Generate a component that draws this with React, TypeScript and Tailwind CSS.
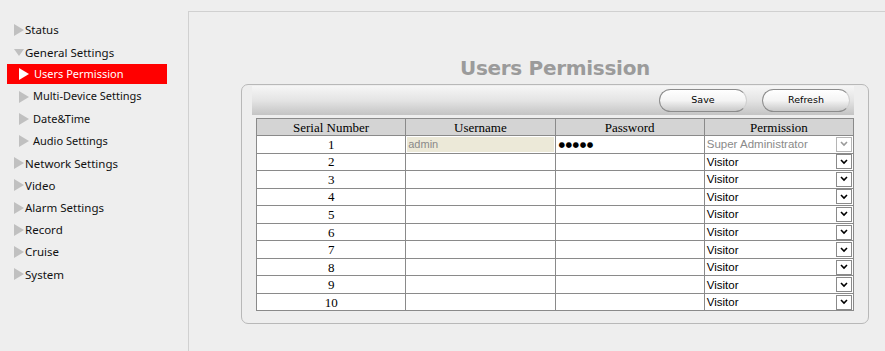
import React from 'react'

const MENU = [
  { label: 'Status', level: 0 },
  { label: 'General Settings', level: 0, open: true },
  { label: 'Users Permission', level: 1, active: true },
  { label: 'Multi-Device Settings', level: 1 },
  { label: 'Date&Time', level: 1 },
  { label: 'Audio Settings', level: 1 },
  { label: 'Network Settings', level: 0 },
  { label: 'Video', level: 0 },
  { label: 'Alarm Settings', level: 0 },
  { label: 'Record', level: 0 },
  { label: 'Cruise', level: 0 },
  { label: 'System', level: 0 },
]

const USERS = Array.from({ length: 10 }, (_, i) => ({
  id: i + 1,
  username: i === 0 ? 'admin' : '',
  password: i === 0 ? '●●●●●' : '',
  permission: i === 0 ? 'Super Administrator' : 'Visitor',
}))

function Triangle({ open, color }: { open?: boolean; color: string }) {
  return (
    <svg width="10" height="12" viewBox="0 0 10 12" className="shrink-0">
      {open ? (
        <polygon points="0,3 10,3 5,10" fill={color} />
      ) : (
        <polygon points="0,0 10,6 0,12" fill={color} />
      )}
    </svg>
  )
}

function Sidebar() {
  return (
    <div className="w-[188px] shrink-0 pt-[19px] font-['Noto_Sans',sans-serif]">
      {MENU.map(item => (
        <div key={item.label} className="h-[22.2px] flex items-center">
          {item.active ? (
            <div className="ml-[7px] w-[160px] h-[20px] bg-[#ff0000] flex items-center pl-[12px] gap-[5px] text-white text-[11px]">
              <Triangle color="#ffffff" />
              <span>{item.label}</span>
            </div>
          ) : item.level === 1 ? (
            <div className="pl-[19px] flex items-center gap-[4px] text-[11px] text-[#111]">
              <Triangle color="#c0c0c0" />
              <span>{item.label}</span>
            </div>
          ) : (
            <div className="pl-[14px] flex items-center gap-[1px] text-[11.5px] text-[#111]">
              <Triangle open={item.open} color="#c0c0c0" />
              <span>{item.label}</span>
            </div>
          )}
        </div>
      ))}
    </div>
  )
}

function Select({ value, disabled }: { value: string; disabled?: boolean }) {
  return (
    <div className="flex items-center h-[16px] pl-[2px] pr-[1px]">
      <span
        className={`flex-1 text-[11.5px] leading-[14px] font-['Liberation_Sans',Arial,sans-serif] ${disabled ? 'text-[#8a8a8a]' : 'text-black'}`}
      >
        {value}
      </span>
      <span
        className={`w-[16px] h-[15px] border flex items-center justify-center bg-white ${disabled ? 'border-[#b5b5b5]' : 'border-[#8a8a8a]'}`}
      >
        <svg width="8" height="6" viewBox="0 0 8 6">
          <polyline
            points="1,1 4,4 7,1"
            fill="none"
            stroke={disabled ? '#9a9a9a' : '#000'}
            strokeWidth="1.6"
          />
        </svg>
      </span>
    </div>
  )
}

function PillButton({ label }: { label: string }) {
  return (
    <button className="w-[88px] h-[23px] rounded-full border border-[#8c8c8c] border-r-[#d0d0d0] bg-gradient-to-b from-white via-[#f4f4f4] to-[#c9c9c9] text-[9.5px] text-black font-['DejaVu_Sans',sans-serif]">
      {label}
    </button>
  )
}

export default function App() {
  return (
    <div className="w-[885px] h-[351px] bg-[#eeeeee] flex overflow-hidden">
      <Sidebar />
      <div className="flex-1 mt-[11px] border-t border-l border-[#d0d0d0]">
        <h1 className="mt-[44px] ml-[52px] w-[628px] text-center text-[20px] leading-[24px] font-bold text-[#9b9b9b] font-['DejaVu_Sans',Verdana,sans-serif] tracking-[-0.3px]">
          Users Permission
        </h1>
        <div className="ml-[52px] mt-[4px] w-[628px] h-[240px] rounded-[7px] border border-[#b8b8b8] pl-[10px] pt-[1px]">
          <div className="w-[602px] h-[29px] bg-gradient-to-b from-[#f6f6f6] via-[#e4e4e4] to-[#c4c4c4] flex items-center justify-end gap-[15px] pr-[4px]">
            <PillButton label="Save" />
            <PillButton label="Refresh" />
          </div>
          <table className="ml-[4px] mt-[3px] w-[598px] border-collapse table-fixed font-['Liberation_Serif',serif] text-[13px]">
            <thead>
              <tr className="bg-[#d4d4d4]">
                {['Serial Number', 'Username', 'Password', 'Permission'].map(h => (
                  <th key={h} className="border border-[#8a8a8a] font-normal p-0 h-[17px] leading-[15px]">
                    {h}
                  </th>
                ))}
              </tr>
            </thead>
            <tbody className="bg-white">
              {USERS.map(u => (
                <tr key={u.id}>
                  <td className="border border-[#8a8a8a] text-center p-0 h-[17.55px] leading-[15px]">{u.id}</td>
                  <td className="border border-[#8a8a8a] p-0">
                    {u.username && (
                      <div className="h-[15px] mx-[1px] bg-[#ece9d8] text-[#8a8a8a] text-[11px] pl-[1px] leading-[15px] font-['Liberation_Sans',Arial,sans-serif]">
                        {u.username}
                      </div>
                    )}
                  </td>
                  <td className="border border-[#8a8a8a] p-0 pl-[3px] text-[7.5px] leading-[15px] tracking-[0.5px] font-['DejaVu_Sans',sans-serif]">
                    {u.password}
                  </td>
                  <td className="border border-[#8a8a8a] p-0">
                    <Select value={u.permission} disabled={u.id === 1} />
                  </td>
                </tr>
              ))}
            </tbody>
          </table>
        </div>
      </div>
    </div>
  )
}
